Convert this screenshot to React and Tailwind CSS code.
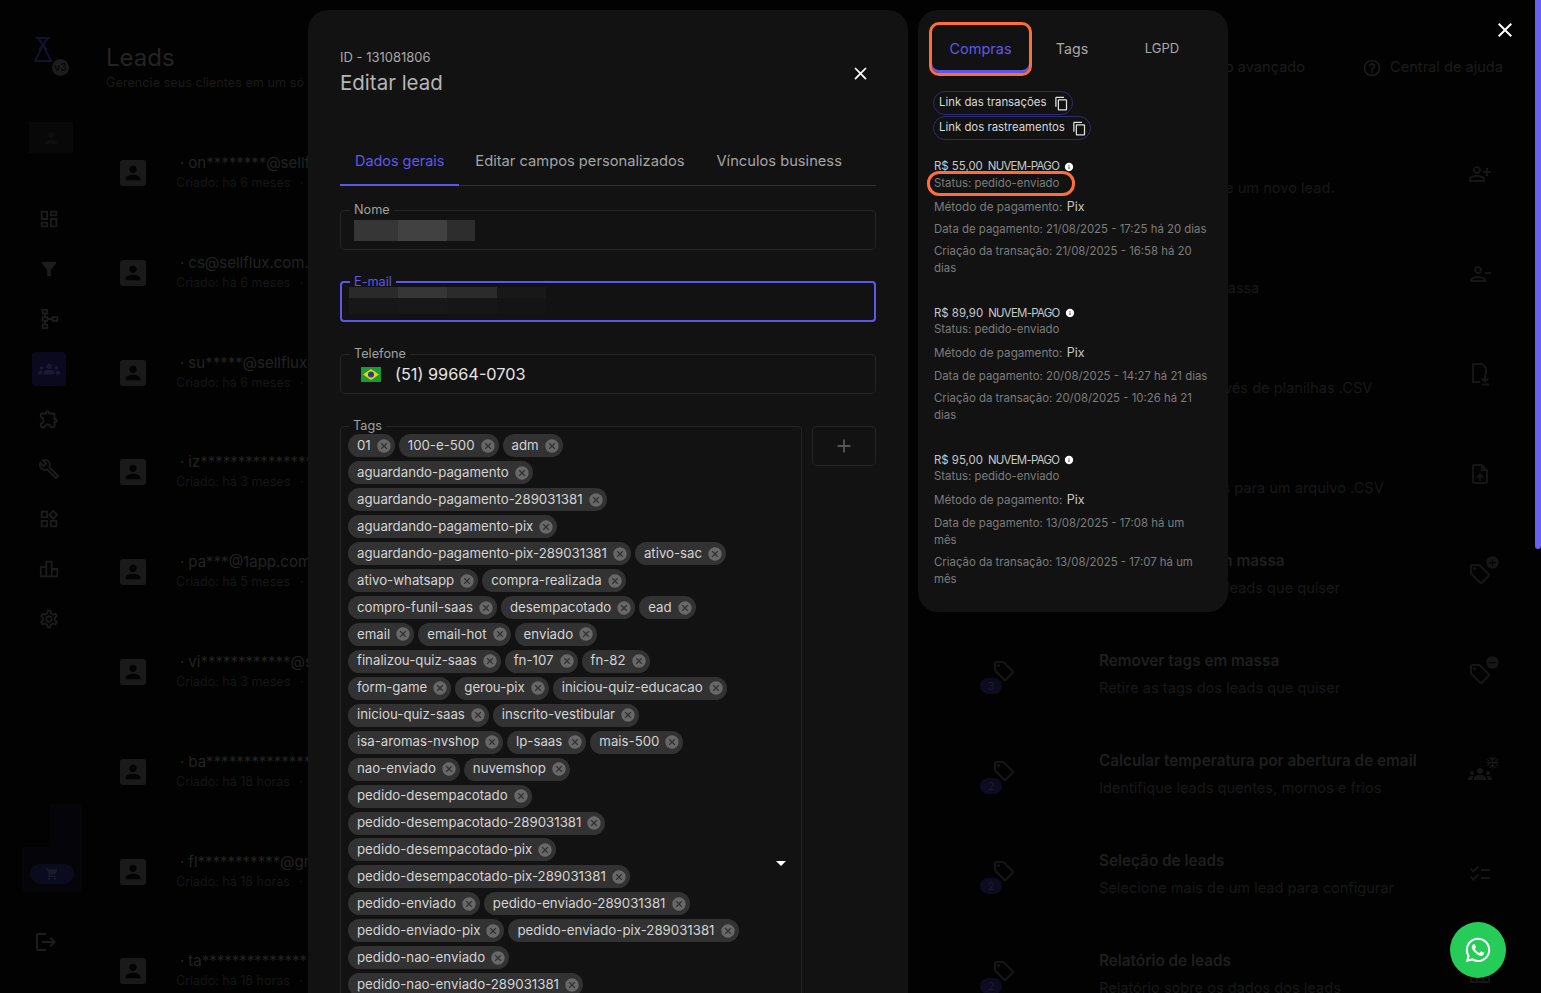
import {
  MdCancel,
  MdChecklist,
  MdClose,
  MdContentCopy,
  MdFilterAlt,
  MdGroups,
  MdHelpOutline,
  MdLogout,
  MdOutlineBuild,
  MdOutlineDashboard,
  MdOutlineExtension,
  MdOutlineLeaderboard,
  MdPerson,
  MdOutlinePersonAddAlt,
  MdOutlinePersonRemove,
  MdOutlineSettings,
  MdOutlineUploadFile,
  MdOutlineWidgets,
  MdShoppingCart,
  MdOutlineLocalOffer,
  MdInfo,
  MdArrowDropDown,
  MdAdd,
  MdAcUnit,
  MdAddCircle,
  MdRemoveCircle,
} from 'react-icons/md';
import { FaWhatsapp } from 'react-icons/fa';

const FONT = "font-['Inter','Liberation_Sans',sans-serif]";

const leads = [
  { email: 'on********@sellflux.com.br', date: 'há 6 meses' },
  { email: 'cs@sellflux.com.br', date: 'há 6 meses' },
  { email: 'su*****@sellflux.com.br', date: 'há 6 meses' },
  { email: 'iz***************@gmail.com', date: 'há 3 meses' },
  { email: 'pa***@1app.com.br', date: 'há 5 meses' },
  { email: 'vi************@sellflux.com', date: 'há 3 meses' },
  { email: 'ba**************@gmail.com', date: 'há 18 horas' },
  { email: 'fl***********@gmail.com', date: 'há 18 horas' },
  { email: 'ta****************@gmail.com', date: 'há 18 horas' },
];

const actions = [
  { title: 'Novo lead', desc: 'Insira manualmente um novo lead.', icon: MdOutlinePersonAddAlt },
  { title: 'Excluir leads', desc: 'Exclua leads em massa', icon: MdOutlinePersonRemove },
  { title: 'Importar leads', desc: 'Importe leads através de planilhas .CSV', icon: FileDownloadIcon },
  { title: 'Exportar leads', desc: 'Exporte seus leads para um arquivo .CSV', icon: MdOutlineUploadFile },
  { title: 'Adicionar tags em massa', desc: 'Adicione tags aos leads que quiser', icon: MdOutlineLocalOffer, badge: MdAddCircle },
  { count: '3', title: 'Remover tags em massa', desc: 'Retire as tags dos leads que quiser', icon: MdOutlineLocalOffer, badge: MdRemoveCircle },
  { count: '2', title: 'Calcular temperatura por abertura de email', desc: 'Identifique leads quentes, mornos e frios', icon: MdGroups, badge: MdAcUnit },
  { count: '2', title: 'Seleção de leads', desc: 'Selecione mais de um lead para configurar', icon: MdChecklist },
  { count: '2', title: 'Relatório de leads', desc: 'Relatório sobre os dados dos leads', icon: MdOutlineLeaderboard },
];

const navIcons = [MdOutlineDashboard, MdFilterAlt, TreeIcon, MdGroups, MdOutlineExtension, MdOutlineBuild, MdOutlineWidgets, MdOutlineLeaderboard, MdOutlineSettings];

const tags = [
  '01', '100-e-500', 'adm', 'aguardando-pagamento', 'aguardando-pagamento-289031381', 'aguardando-pagamento-pix',
  'aguardando-pagamento-pix-289031381', 'ativo-sac', 'ativo-whatsapp', 'compra-realizada', 'compro-funil-saas',
  'desempacotado', 'ead', 'email', 'email-hot', 'enviado', 'finalizou-quiz-saas', 'fn-107', 'fn-82', 'form-game',
  'gerou-pix', 'iniciou-quiz-educacao', 'iniciou-quiz-saas', 'inscrito-vestibular', 'isa-aromas-nvshop', 'lp-saas',
  'mais-500', 'nao-enviado', 'nuvemshop', 'pedido-desempacotado', 'pedido-desempacotado-289031381',
  'pedido-desempacotado-pix', 'pedido-desempacotado-pix-289031381', 'pedido-enviado', 'pedido-enviado-289031381',
  'pedido-enviado-pix', 'pedido-enviado-pix-289031381', 'pedido-nao-enviado', 'pedido-nao-enviado-289031381',
];

const purchases = [
  { price: 'R$ 55,00', paid: '21/08/2025 - 17:25 há 20 dias', created: '21/08/2025 - 16:58 há 20 dias' },
  { price: 'R$ 89,90', paid: '20/08/2025 - 14:27 há 21 dias', created: '20/08/2025 - 10:26 há 21 dias' },
  { price: 'R$ 95,00', paid: '13/08/2025 - 17:08 há um mês', created: '13/08/2025 - 17:07 há um mês' },
];

function TreeIcon({ className }) {
  return (
    <svg viewBox="0 0 24 24" fill="none" stroke="currentColor" strokeWidth="2" className={className}>
      <rect x="5" y="2" width="5" height="4" />
      <rect x="5" y="10" width="5" height="4" />
      <rect x="5" y="18" width="5" height="4" />
      <rect x="16" y="10" width="5" height="4" />
      <path d="M7.5 6v4M7.5 14v4M10 12h6" />
    </svg>
  );
}

function FileDownloadIcon({ className }) {
  return (
    <svg viewBox="0 0 24 24" fill="none" stroke="currentColor" strokeWidth="2" className={className}>
      <path d="M12 20H5V2h9l4 4v7" />
      <path d="M17 13v6M14 16.500l3 3 3-3M14 22.500h7" />
    </svg>
  );
}

function Background() {
  return (
    <div className="flex h-full">
      <aside className="flex w-[96px] shrink-0 flex-col items-center pt-[37px] text-[#1c1c1c]">
        <div className="relative h-[40px] w-[40px]">
          <svg viewBox="0 0 20 26" fill="none" stroke="#12112f" strokeWidth="2" className="ml-[5px] h-[26px] w-[20px]">
            <path d="M3 1h14M5 1l9 12M15 1L6 13M10 8L2 24h16L10 8z" />
          </svg>
          <span className="absolute right-[-1px] top-[22px] flex h-[17px] w-[17px] items-center justify-center rounded-full bg-[#1c1c1c] text-[10px] font-bold text-[#0a0a0a]">v3</span>
        </div>
        <div className="ml-[6px] mt-[45px] flex h-[31px] w-[44px] items-center justify-center bg-[#080808]">
          <MdPerson className="h-[18px] w-[18px] text-[#0f0f0f]" />
        </div>
        <div className="mt-[49px] flex flex-col items-center gap-[16px] pl-[2px]">
          {navIcons.map((Icon, i) => (
            <div key={i} className={`flex h-[34px] w-[34px] items-center justify-center rounded-[4px] ${i === 3 ? 'bg-[#0a0920] text-[#1b1a35]' : ''}`}>
              <Icon className="h-[22px] w-[22px]" />
            </div>
          ))}
        </div>
        <div className="ml-[8px] mt-[168px] flex h-[88px] w-[60px] flex-col rounded-[4px] bg-[#050509]">
          <div className="h-[43px] w-[28px] bg-[#020202]" />
          <div className="mx-auto mt-[17px] flex h-[20px] w-[44px] items-center justify-center rounded-full bg-[#0a0c1e]">
            <MdShoppingCart className="h-[14px] w-[14px] text-[#1a1a2a]" />
          </div>
        </div>
        <MdLogout className="mt-[38px] h-[24px] w-[24px] -translate-x-[2px]" />
      </aside>

      <main className="min-w-0 flex-1 overflow-hidden">
        <header className="flex h-[129px] items-start justify-between pl-[10px] pr-[38px] pt-[43px]">
          <div>
            <h1 className="text-[24px] leading-[30px] text-[#242424]">Leads</h1>
            <p className="mt-[2px] whitespace-nowrap text-[12.7px] leading-[16px] text-[#1a1a1a]">Gerencie seus clientes em um só lugar</p>
          </div>
          <div className="flex items-center gap-[57px] pt-[14px] text-[14.6px] text-[#1c1c1c]">
            <span>Filtro avançado</span>
            <span className="flex items-center gap-[8px]">
              <MdHelpOutline className="h-[20px] w-[20px]" />
              Central de ajuda
            </span>
          </div>
        </header>
        <div className="flex">
          <div className="w-[820px] shrink-0 overflow-hidden pl-[24px]">
            {leads.map((l) => (
              <div key={l.email} className="relative h-[99.8px] pt-[31px]">
                <div className="flex h-[26px] w-[26px] items-center justify-center rounded-[3px] bg-[#1a1a1a]">
                  <MdPerson className="h-[22px] w-[22px] text-[#030303]" />
                </div>
                <div className="absolute left-[56px] top-[24px] whitespace-nowrap">
                  <p className="text-[15px] leading-[20px] text-[#222222]"><span className="mx-[4px] text-[#222]">·</span>{l.email}</p>
                  <p className="text-[12.5px] leading-[20px] text-[#161616]">Criado: {l.date} <span className="mx-[6px]">·</span> Atualizado</p>
                </div>
              </div>
            ))}
          </div>
          <div className="min-w-0 flex-1">
            {actions.map((a, i) => {
              const Icon = a.icon;
              const Badge = a.badge;
              return (
                <div key={i} className="flex h-[100px] items-start pt-[22px]">
                  <div className="relative ml-[64px] mt-[8px] h-[30px] w-[40px]">
                    <MdOutlineLocalOffer className="absolute left-[12px] top-0 h-[24px] w-[24px] text-[#161616]" />
                    {a.count && (
                      <span className="absolute left-0 top-[19px] flex h-[16px] w-[22px] items-center justify-center rounded-full bg-[#0c0b20] text-[11px] text-[#1b1b2b]">{a.count}</span>
                    )}
                  </div>
                  <div className="ml-[79px] min-w-0 flex-1">
                    <p className="h-[20px] whitespace-nowrap text-[15.3px] font-semibold leading-[20px] text-[#1f1f1f]">{a.title}</p>
                    <p className="mt-[7px] whitespace-nowrap text-[14.6px] leading-[20px] text-[#181818]">{a.desc}</p>
                  </div>
                  <div className="relative mr-[49px] mt-[11px] h-[24px] w-[24px]">
                    <Icon className="h-[24px] w-[24px] text-[#161616]" />
                    {Badge && <Badge className="absolute right-[-8px] top-[-7px] h-[15px] w-[15px] text-[#161616]" />}
                  </div>
                </div>
              );
            })}
          </div>
        </div>
      </main>
    </div>
  );
}

function Field({ label, focused, className = '', children }) {
  return (
    <fieldset className={`h-[45px] rounded-[4px] px-[8px] ${focused ? 'border-2 border-[#5f57ea]' : 'border border-[#242424]'} ${className}`}>
      <legend className={`px-[4px] text-[12.7px] leading-[10px] ${focused ? 'text-[#5f57ea]' : 'ml-[1px] text-[#a0a0a0]'}`}>{label}</legend>
      {children}
    </fieldset>
  );
}

function LeadModal() {
  return (
    <section className="absolute left-[308px] top-[10px] h-[1100px] w-[600px] rounded-[20px] bg-[#121212] px-[32px] pt-[39px]">
      <div className="flex items-start justify-between">
        <div>
          <p className="text-[13px] leading-[17px] text-[#a8a8a8]">ID - 131081806</p>
          <h2 className="mt-[3px] text-[20.5px] leading-[28px] text-[#b5b5b5]">Editar lead</h2>
        </div>
        <MdClose className="mr-[5px] mt-[14px] h-[21px] w-[21px] text-white" />
      </div>
      <nav className="mt-[47px] flex h-[42px] border-b border-[#2f2f2f]">
        <span className="-mb-[1px] h-[42px] border-b-2 border-[#5f57ea] px-[15px] pt-[6px] text-[14.4px] text-[#5f57ea]">Dados gerais</span>
        <span className="ml-[16px] pt-[6px] text-[14.7px] text-[#a4a4a4]">Editar campos personalizados</span>
        <span className="ml-[32px] pt-[6px] text-[14.7px] text-[#a4a4a4]">Vínculos business</span>
      </nav>
      <Field label="Nome" className="mt-[19px]">
        <div className="ml-[5px] mt-[5px] flex h-[21px] w-[121px]">
          <div className="w-[44px] bg-[#363636]" />
          <div className="w-[49px] bg-[#414141]" />
          <div className="w-[28px] bg-[#2d2d2d]" />
        </div>
      </Field>
      <Field label="E-mail" focused className="mt-[27px]">
        <div className="-ml-[1px] w-[197px]">
          <div className="flex h-[11px]">
            <div className="w-[49px] bg-[#2a2a2a]" />
            <div className="w-[49px] bg-[#363636]" />
            <div className="w-[50px] bg-[#2b2b2b]" />
            <div className="w-[49px] bg-[#181818]" />
          </div>
          <div className="flex h-[16px]">
            <div className="w-[49px] bg-[#171717]" />
            <div className="w-[49px] bg-[#181818]" />
            <div className="w-[50px] bg-[#161616]" />
            <div className="w-[49px] bg-[#141414]" />
          </div>
        </div>
      </Field>
      <Field label="Telefone" className="mt-[27px]">
        <div className="ml-[12px] flex h-[30px] items-center">
          <svg viewBox="0 0 20 15" className="h-[15px] w-[20px]">
            <rect width="20" height="15" fill="#179a3b" />
            <path d="M10 2l8 5.500-8 5.500-8-5.500z" fill="#f2d100" />
            <circle cx="10" cy="7.500" r="3" fill="#1e3f8a" />
          </svg>
          <span className="ml-[14px] text-[16.3px] text-[#e4e4e4]">(51) 99664-0703</span>
        </div>
      </Field>
      <div className="mt-[27px] flex gap-[10px]">
        <fieldset className="relative h-[700px] w-[462px] rounded-[4px] border border-[#242424] pl-[7px] pr-[58px]">
          <legend className="ml-[1px] px-[4px] text-[12.7px] leading-[10px] text-[#a0a0a0]">Tags</legend>
          <div className="flex flex-wrap gap-x-[4px] gap-y-[3.95px] pt-[3.4px]">
            {tags.map((t) => (
              <span key={t} className="flex h-[23px] items-center whitespace-nowrap rounded-full bg-[#323232] pl-[9px] pr-[3px] text-[13.25px] text-[#d4d4d4]">
                {t}
                <MdCancel className="ml-[5px] h-[16px] w-[16px] text-[#686868]" />
              </span>
            ))}
          </div>
          <MdArrowDropDown className="absolute right-[8px] top-[420px] h-[24px] w-[24px] text-white" />
        </fieldset>
        <div className="mt-[5px] flex h-[40px] w-[64px] items-center justify-center rounded-[4px] border border-[#242424]">
          <MdAdd className="h-[22px] w-[22px] text-[#555]" />
        </div>
      </div>
    </section>
  );
}

function PurchasePanel() {
  return (
    <section className="absolute left-[918px] top-[10px] h-[602px] w-[310px] rounded-[20px] bg-[#121212] px-[16px] pt-[12px]">
      <nav className="-ml-[5px] flex h-[54px] items-stretch text-[14.2px]">
        <span className="flex w-[103px] items-center justify-center rounded-[10px] border-[3px] border-[#ff6d3a] text-[14.5px] text-[#5f57ea] shadow-[inset_0_-3px_0_#5f57ea]">Compras</span>
        <span className="flex w-[80px] items-center justify-center text-[#a8a8a8]">Tags</span>
        <span className="flex w-[100px] items-center justify-center text-[13px] text-[#a8a8a8]">LGPD</span>
      </nav>
      <div className="mt-[15px] flex flex-col items-start gap-[1px]">
        {['Link das transações', 'Link dos rastreamentos'].map((l) => (
          <span key={l} className="-ml-[1px] flex h-[24px] items-center rounded-full border border-[#2c2a70] pl-[5px] pr-[3px] text-[11.4px] text-[#d8d8d8]">
            {l}
            <MdContentCopy className="ml-[7px] h-[15px] w-[15px] text-[#e0e0e0]" />
          </span>
        ))}
      </div>
      <div className="mt-[18.5px] flex flex-col gap-[28.3px]">
        {purchases.map((p, i) => (
          <div key={p.price} className="w-[276px] text-[11.4px] text-[#7c7c7c]">
            <p className="flex h-[16px] items-center whitespace-nowrap text-[11.4px] text-[#c8c8c8]">
              {p.price}<span className="ml-[5px] tracking-[-0.7px]">NUVEM-PAGO</span>
              <MdInfo className="ml-[5px] h-[10px] w-[10px] text-white" />
            </p>
            <div className="relative h-[16px] leading-[16px]">
              Status: pedido-enviado
              {i === 0 && <span className="absolute -left-[7px] -top-[4px] h-[25px] w-[148px] rounded-[12px] border-[3px] border-[#ff6d3a]" />}
            </div>
            <p className="mt-[8px] text-[11.7px] leading-[16px]">Método de pagamento: <span className="ml-[1px] text-[12.5px] text-[#c8c8c8]">Pix</span></p>
            <p className="mt-[6.500px] leading-[17px]">Data de pagamento: {p.paid}</p>
            <p className="mt-[5px] leading-[17px]">Criação da transação: {p.created}</p>
          </div>
        ))}
      </div>
    </section>
  );
}

export default function App() {
  return (
    <div className={`relative h-[993px] w-full overflow-hidden bg-[#020202] ${FONT}`}>
      <Background />
      <LeadModal />
      <PurchasePanel />
      <MdClose className="absolute right-[24px] top-[18px] h-[24px] w-[24px] text-white" />
      <div className="absolute right-0 top-0 h-[549px] w-[6px] rounded-b-[3px] bg-[#6a5ff5]" />
      <div className="absolute left-[1450px] top-[922px] flex h-[56px] w-[56px] items-center justify-center rounded-full bg-[#25cd58]">
        <FaWhatsapp className="h-[28px] w-[28px] text-white" />
      </div>
    </div>
  );
}
